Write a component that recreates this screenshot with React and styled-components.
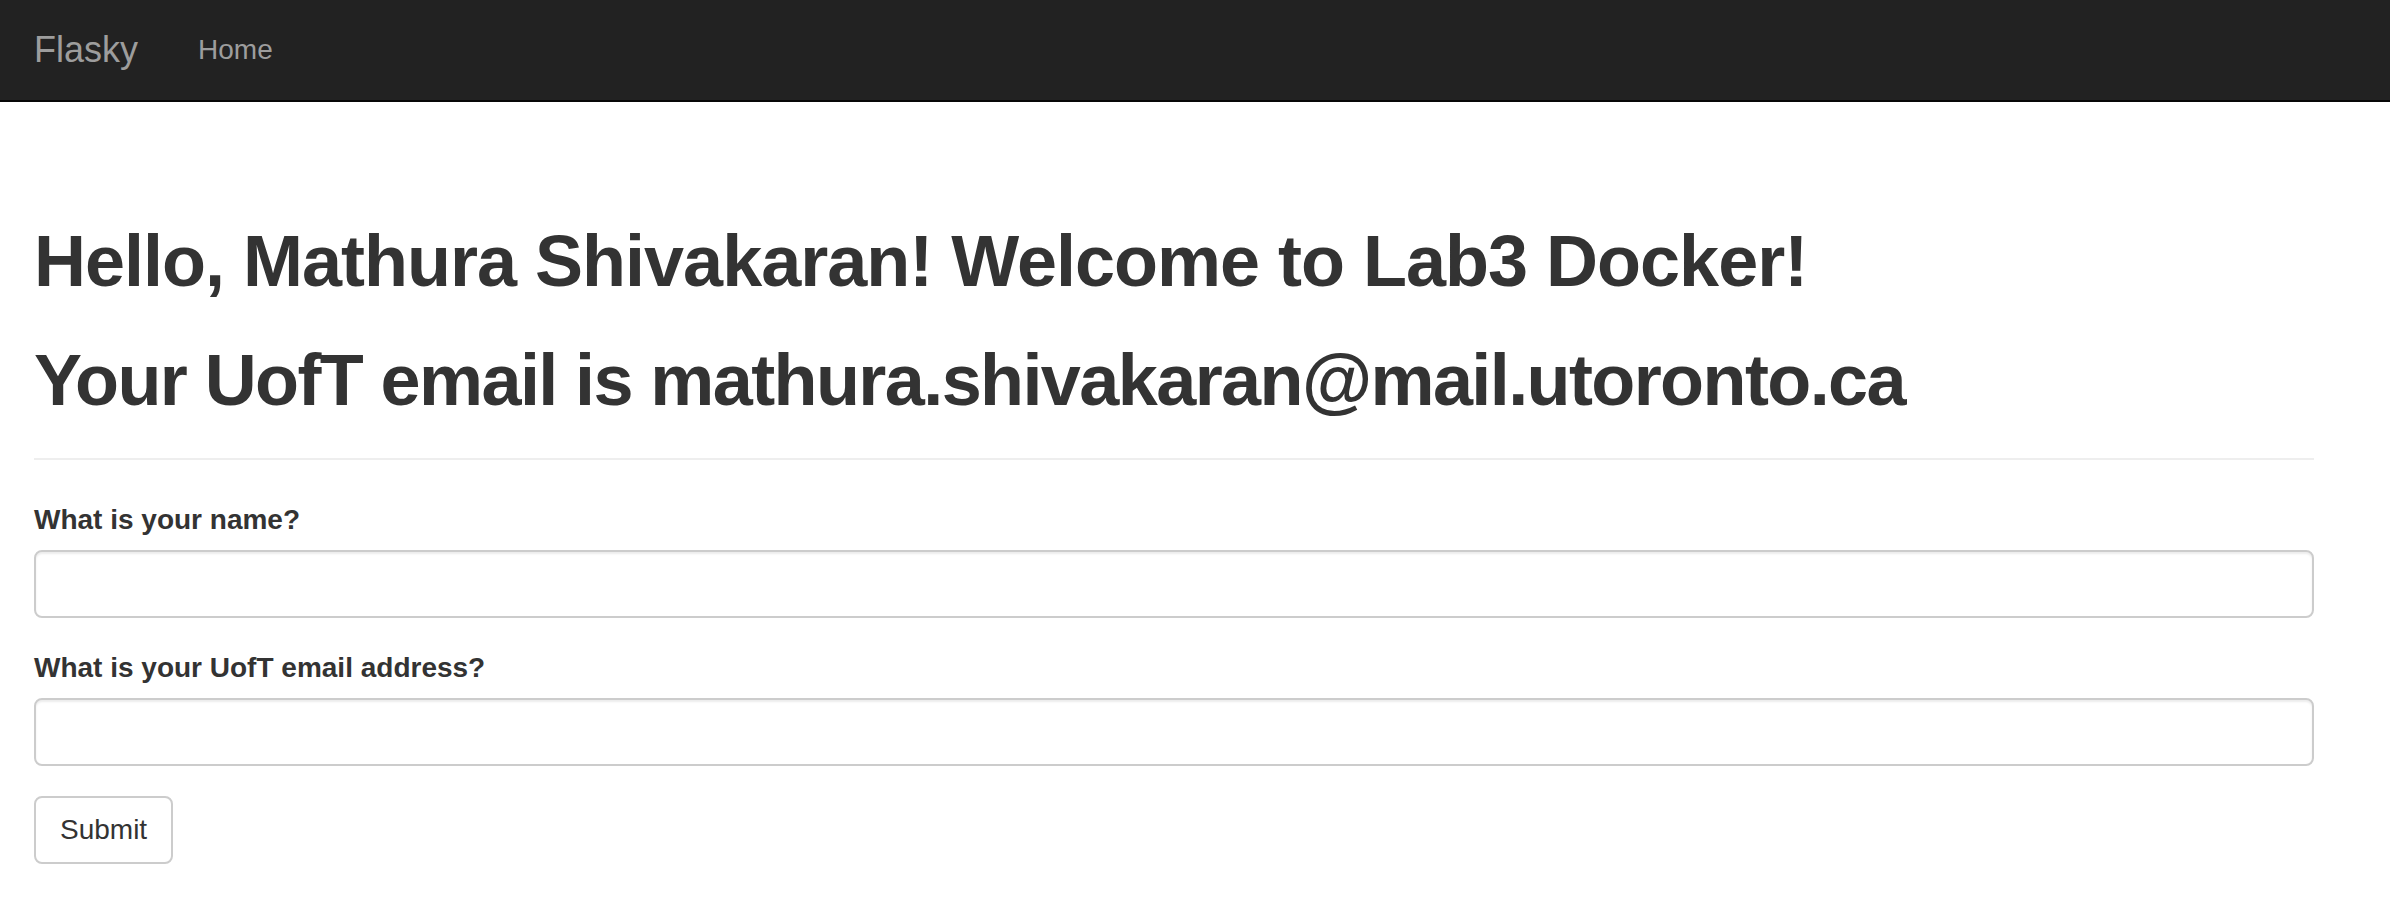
import styled, { createGlobalStyle } from "styled-components";

const GlobalStyle = createGlobalStyle`
    html, body {
        margin: 0;
        padding: 0;
        background-color: #FFFFFF;
    }
    body {
        font-family: "Liberation Sans", Arial, sans-serif;
        font-size: 28px;
        line-height: 1.42857143;
        color: #333333;
    }
    * {
        box-sizing: border-box;
    }
`

export default function App() {
    return (
        <>
            <GlobalStyle />
            <Navbar>
                <NavInner>
                    <Brand href="#">Flasky</Brand>
                    <NavLink href="#">Home</NavLink>
                </NavInner>
            </Navbar>
            <Container>
                <PageHeader>
                    <Heading $tracking="-1px">Hello, Mathura Shivakaran! Welcome to Lab3 Docker!</Heading>
                    <Heading $tracking="-1.6px">Your UofT email is mathura.shivakaran@mail.utoronto.ca</Heading>
                </PageHeader>
                <form onSubmit={e => e.preventDefault()}>
                    <FormGroup>
                        <Label htmlFor="name">What is your name?</Label>
                        <Input id="name" type="text" />
                    </FormGroup>
                    <FormGroup>
                        <Label htmlFor="email">What is your UofT email address?</Label>
                        <Input id="email" type="text" />
                    </FormGroup>
                    <Button type="submit">Submit</Button>
                </form>
            </Container>
        </>
    )
};

const Navbar = styled.nav`
    width: 100%;
    height: 102px;
    background-color: #222222;
    border-bottom: 2px solid #080808;
    margin-bottom: 40px;
`
const NavInner = styled.div`
    height: 100%;
    padding-left: 34px;
    display: flex;
    align-items: center;
`
const Brand = styled.a`
    font-size: 36px;
    line-height: 40px;
    padding-right: 30px;
    color: #9d9d9d;
    text-decoration: none;
`
const NavLink = styled.a`
    font-size: 28px;
    line-height: 40px;
    padding: 0 30px;
    color: #9d9d9d;
    text-decoration: none;
`
const Container = styled.div`
    display: flow-root;
    width: 2348px;
    padding: 0 34px;
`
const PageHeader = styled.div`
    margin: 80px 0 40px;
    padding-bottom: 18px;
    border-bottom: 2px solid #eeeeee;
`
const Heading = styled.h1`
    font-size: 72px;
    font-weight: bold;
    letter-spacing: ${props => props.$tracking || '-1.3px'};
    line-height: 1.1;
    margin: 40px 0 20px;
    color: #333333;
    white-space: nowrap;

    &:first-child {
        margin-top: 0;
    }
`
const FormGroup = styled.div`
    margin-bottom: 30px;
`
const Label = styled.label`
    display: inline-block;
    max-width: 100%;
    margin-bottom: 10px;
    font-weight: bold;
`
const Input = styled.input`
    display: block;
    width: 100%;
    height: 68px;
    padding: 12px 24px;
    font-family: inherit;
    font-size: 28px;
    color: #555555;
    background-color: #FFFFFF;
    border: 2px solid #cccccc;
    border-radius: 8px;
    box-shadow: inset 0 2px 2px rgba(0, 0, 0, .075);
    outline: none;
`
const Button = styled.button`
    display: inline-block;
    padding: 12px 24px;
    font-family: inherit;
    font-size: 28px;
    line-height: 40px;
    color: #333333;
    background-color: #FFFFFF;
    border: 2px solid #cccccc;
    border-radius: 8px;
    cursor: pointer;
`
